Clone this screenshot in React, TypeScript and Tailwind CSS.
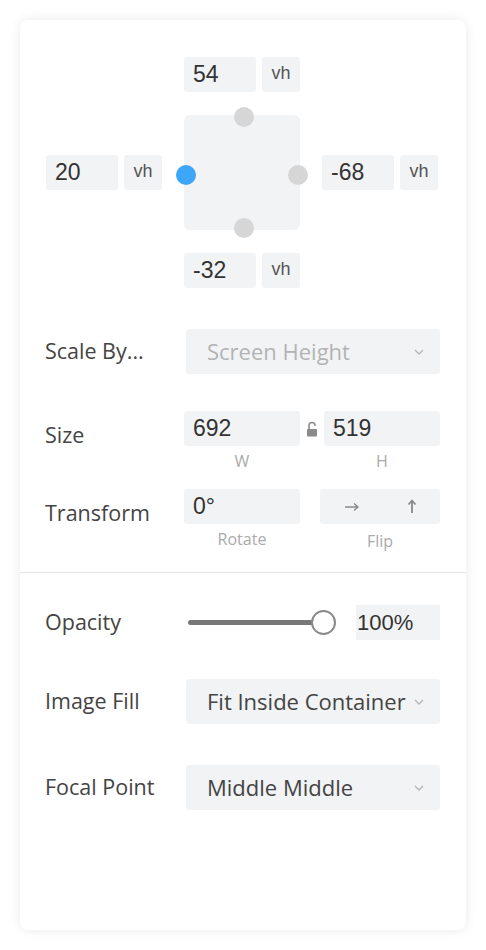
import React from 'react'

const num = "font-['Liberation_Sans',Arial,sans-serif]"
const sans = "font-['Open_Sans',sans-serif]"

function NumBox({ value, className = '' }: { value: string; className?: string }) {
  return (
    <div className={`flex h-[35px] items-center rounded-[3px] bg-[#f2f3f5] pl-[9px] text-[23px] text-[#333] ${num} ${className}`}>
      {value}
    </div>
  )
}

function Unit() {
  return (
    <div className={`flex h-[35px] w-[38px] items-center justify-center rounded-[3px] bg-[#f2f3f5] pb-[2px] text-[18px] text-[#555] ${num}`}>
      vh
    </div>
  )
}

function OffsetInput({ value }: { value: string }) {
  return (
    <div className="flex w-[116px] gap-[6px]">
      <NumBox value={value} className="w-[72px]" />
      <Unit />
    </div>
  )
}

function Chevron() {
  return (
    <svg width="10" height="6" viewBox="0 0 10 6" className="shrink-0">
      <polyline points="1,1 5,5 9,1" fill="none" stroke="#b5b5b5" strokeWidth="1.3" />
    </svg>
  )
}

function Select({ value, muted = false }: { value: string; muted?: boolean }) {
  return (
    <div className="ml-[2px] flex h-[45px] w-[254px] items-center justify-between rounded-[3px] bg-[#f2f3f5] pl-[21px] pr-[16px]">
      <span className={`text-[22px] ${muted ? 'text-[#b3b3b3]' : 'text-[#444]'} whitespace-nowrap`}>{value}</span>
      <Chevron />
    </div>
  )
}

function Label({ children, low = false }: { children: React.ReactNode; low?: boolean }) {
  return (
    <div className={`w-[139px] shrink-0 text-[21.5px] text-[#444] ${low ? 'h-[35px] pt-[8px]' : ''}`}>
      {children}
    </div>
  )
}

function Lock() {
  return (
    <svg width="12" height="16" viewBox="0 0 12 16" className="mx-[6px] shrink-0">
      <path d="M3 8 V4.5 a3 3 0 0 1 6 0 V5" fill="none" stroke="#8a8a8a" strokeWidth="1.6" />
      <rect x="1" y="8" width="10" height="7.5" rx="1" fill="#8a8a8a" />
    </svg>
  )
}

function Dot({ className }: { className: string }) {
  return <div className={`absolute h-[20px] w-[20px] rounded-full ${className}`} />
}

export default function App() {
  return (
    <div className={`min-h-screen bg-white p-[20px] ${sans}`}>
      <div className="flex h-[910px] w-[446px] flex-col rounded-[8px] bg-white shadow-[0_0_12px_rgba(0,0,0,0.09)]">
        {/* position diagram */}
        <div className="flex flex-col pl-[26px] pt-[37px]">
          <div className="ml-[138px]">
            <OffsetInput value="54" />
          </div>
          <div className="mt-[23px] flex items-center gap-[22px]">
            <OffsetInput value="20" />
            <div className="relative h-[115px] w-[116px] rounded-[6px] bg-[#f2f3f5]">
              <Dot className="left-[50px] top-[-8px] bg-[#d6d6d6]" />
              <Dot className="left-[-8px] top-[50px] bg-[#3ea6f8]" />
              <Dot className="right-[-8px] top-[50px] bg-[#d6d6d6]" />
              <Dot className="bottom-[-8px] left-[50px] bg-[#d6d6d6]" />
            </div>
            <OffsetInput value="-68" />
          </div>
          <div className="ml-[138px] mt-[23px]">
            <OffsetInput value="-32" />
          </div>
        </div>

        <div className="pl-[25px] pr-[26px]">
          <div className="mt-[41px] flex items-center">
            <Label>Scale By...</Label>
            <Select value="Screen Height" muted />
          </div>

          <div className="mt-[37px] flex items-start">
            <Label low>Size</Label>
            <div className="flex items-center">
              <NumBox value="692" className="w-[116px]" />
              <Lock />
              <NumBox value="519" className="w-[116px]" />
            </div>
          </div>
          <div className="mt-[5px] flex h-[20px] pl-[139px] text-[16px] leading-[20px] text-[#aaa]">
            <div className="w-[116px] text-center">W</div>
            <div className="ml-[24px] w-[116px] text-center">H</div>
          </div>

          <div className="mt-[18px] flex items-start">
            <Label low>Transform</Label>
            <div className="flex items-center gap-[20px]">
              <NumBox value="0°" className="w-[116px]" />
              <div className="flex h-[35px] w-[120px] items-center justify-around rounded-[3px] bg-[#f2f3f5]">
                <svg width="16" height="10" viewBox="0 0 16 10">
                  <path d="M1 5 H14 M10 1.5 L14 5 L10 8.5" fill="none" stroke="#8a8a8a" strokeWidth="1.4" />
                </svg>
                <svg width="10" height="15" viewBox="0 0 10 15">
                  <path d="M5 14 V2 M1.5 5.5 L5 1.5 L8.5 5.5" fill="none" stroke="#8a8a8a" strokeWidth="1.8" />
                </svg>
              </div>
            </div>
          </div>
          <div className="mt-[5px] flex h-[20px] pl-[139px] text-[16px] leading-[20px] text-[#aaa]">
            <div className="w-[116px] text-center">Rotate</div>
            <div className="ml-[20px] w-[120px] pt-[2px] text-center">Flip</div>
          </div>
        </div>

        <div className="mt-[23px] h-px bg-[#e6e6e6]" />

        <div className="pl-[25px] pr-[26px]">
          <div className="mt-[32px] flex items-center">
            <Label>Opacity</Label>
            <div className="relative ml-[4px] flex h-[35px] w-[148px] items-center">
              <div className="h-[5px] w-[128px] rounded-full bg-[#777]" />
              <div className="absolute left-[123px] top-[5px] h-[25px] w-[25px] rounded-full border-2 border-[#8a8a8a] bg-white" />
            </div>
            <div className={`ml-[20px] flex h-[35px] w-[84px] items-center bg-[#f2f3f5] pl-[1px] text-[22px] text-[#333] ${num}`}>
              100%
            </div>
          </div>

          <div className="mt-[39px] flex items-center">
            <Label>Image Fill</Label>
            <Select value="Fit Inside Container" />
          </div>

          <div className="mt-[41px] flex items-center">
            <Label>Focal Point</Label>
            <Select value="Middle Middle" />
          </div>
        </div>
      </div>
    </div>
  )
}
